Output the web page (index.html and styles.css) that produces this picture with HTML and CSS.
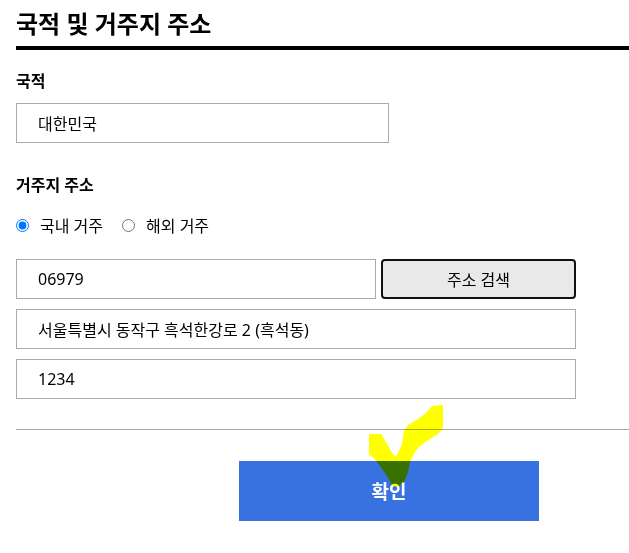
FILE: index.html
```html
<!DOCTYPE html>
<html lang="ko">
<head>
<meta charset="utf-8">
<title>국적 및 거주지 주소</title>
<link rel="stylesheet" href="styles.css">
</head>
<body>
<div class="page">
  <h1 class="title">국적 및 거주지 주소</h1>
  <section class="field nationality">
    <div class="label">국적</div>
    <div class="input country">대한민국</div>
  </section>
  <section class="field address">
    <div class="label">거주지 주소</div>
    <div class="radios">
      <label class="radio"><input type="radio" name="res" checked><span>국내 거주</span></label>
      <label class="radio"><input type="radio" name="res"><span>해외 거주</span></label>
    </div>
    <div class="inputs">
      <div class="row">
        <div class="input zip">06979</div>
        <button class="search" type="button">주소 검색</button>
      </div>
      <div class="input full">서울특별시 동작구 흑석한강로 2 (흑석동)</div>
      <div class="input full">1234</div>
    </div>
  </section>
  <hr class="divider">
  <button class="confirm" type="button">확인</button>
</div>
<svg class="check" width="629" height="553" viewBox="0 0 629 553" aria-hidden="true">
  <polygon points="369,434 381,434 386,442 392,453 396,457 402,444 404,431 408,425 418,419 426,413 432,406 443,405 443,428 438,434 430,439 420,446 415,452 410,462 408,472 404,482 397,487 392,485 387,476 380,466 373,457 369,455" fill="#ffff00"/>
</svg>
</body>
</html>
```
FILE: styles.css
```css
html, body {
  margin: 0;
  padding: 0;
  background: #fff;
  overflow: hidden;
}
body {
  font-family: "Noto Sans", "Noto Sans CJK KR", sans-serif;
  color: #000;
  width: 629px;
  height: 553px;
  position: relative;
}
.page {
  box-sizing: border-box;
  width: 629px;
  padding-left: 16px;
  display: flex;
  flex-direction: column;
}
.title {
  margin: 0;
  font-size: 24px;
  font-weight: 700;
  line-height: 32px;
  padding: 8px 0 6px;
  border-bottom: 4px solid #000;
}
.field {
  display: flex;
  flex-direction: column;
  align-items: flex-start;
}
.label {
  font-size: 16px;
  font-weight: 700;
  line-height: 22px;
}
.nationality {
  margin-top: 20px;
}
.nationality .input {
  margin-top: 11px;
}
.input {
  box-sizing: border-box;
  height: 40px;
  border: 1px solid #aaa;
  padding-left: 21px;
  font-size: 16px;
  display: flex;
  align-items: center;
  background: #fff;
}
.country {
  width: 373px;
}
.address {
  margin-top: 31px;
}
.radios {
  margin-top: 19px;
  height: 20px;
  display: flex;
  align-items: center;
  gap: 19px;
}
.radio {
  display: flex;
  align-items: center;
  gap: 11px;
  font-size: 16px;
}
.radio input {
  margin: 0;
  width: 13px;
  height: 13px;
}
.inputs {
  margin-top: 24px;
  display: flex;
  flex-direction: column;
  gap: 10px;
}
.row {
  display: flex;
  gap: 5px;
}
.zip {
  width: 360px;
}
.search {
  box-sizing: border-box;
  width: 195px;
  height: 40px;
  border: 2px solid #111;
  border-radius: 4px;
  background: #e9e9e9;
  font-family: inherit;
  font-size: 16px;
  color: #000;
  padding: 0;
}
.full {
  width: 560px;
}
.divider {
  align-self: stretch;
  margin: 30px 0 0;
  border: 0;
  border-top: 1px solid #aaa;
  height: 0;
}
.confirm {
  align-self: flex-start;
  margin: 31px 0 0 223px;
  width: 300px;
  height: 60px;
  background: #3871e0;
  color: #fff;
  border: 0;
  font-family: inherit;
  font-weight: 700;
  font-size: 19px;
  padding: 0;
}
.check {
  position: absolute;
  left: 0;
  top: 0;
  pointer-events: none;
  mix-blend-mode: multiply;
}
```
